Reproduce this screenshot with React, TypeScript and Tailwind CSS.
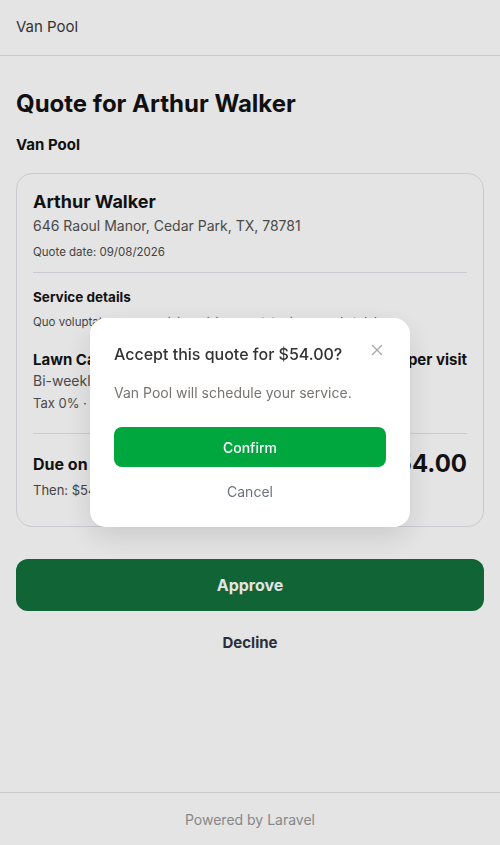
import React from "react";

const font = { fontFamily: "Inter, 'Noto Sans', sans-serif" };

function QuoteCard() {
  return (
    <div className="mt-[18px] rounded-2xl border border-[#e0e4e9] bg-white px-4 pt-4 pb-[26px]">
      <p className="text-[18px] leading-6 font-bold text-[#141414]">Arthur Walker</p>
      <p className="mt-0.5 text-[14px] leading-5 text-[#535353]">646 Raoul Manor, Cedar Park, TX, 78781</p>
      <p className="mt-2 text-[11.5px] leading-4 text-[#4c4c4c]">Quote date: 09/08/2026</p>

      <div className="mt-3 border-t border-[#e0e4e9]" />

      <p className="mt-3.5 text-[13.5px] leading-5 font-bold text-[#141414]">Service details</p>
      <p className="mt-[7px] text-[11.5px] leading-4 text-[#4c4c4c]">
        Quo voluptatem rerum minima nisi consectetur ipsa quod et dolor.
      </p>

      <div className="mt-[19px] flex items-center justify-between">
        <p className="text-[15px] leading-[22px] font-bold text-[#141414]">Lawn Care</p>
        <p className="text-[15px] leading-[22px] font-bold text-[#141414]">$54.00 per visit</p>
      </div>
      <p className="text-[14px] leading-5 text-[#535353]">Bi-weekly</p>
      <p className="mt-0.5 text-[13px] leading-5 text-[#535353]">Tax 0% · $0.00</p>

      <div className="mt-5 border-t border-[#e0e4e9]" />

      <div className="mt-[14px] flex items-center justify-between">
        <p className="text-[16px] leading-6 font-bold text-[#141414]">Due on approval</p>
        <p className="text-[24px] leading-8 font-bold text-[#141414]">$54.00</p>
      </div>
      <p className="text-[13px] leading-5 text-[#4c4c4c]">Then: $54.00 every 2 weeks</p>
    </div>
  );
}

function ConfirmModal() {
  return (
    <div className="fixed inset-0 flex items-center justify-center bg-[rgba(0,0,0,0.106)]">
      <div className="relative w-[320px] rounded-2xl bg-white px-6 pt-6 pb-5 shadow-[0_10px_30px_rgba(0,0,0,0.12)]">
        <button className="absolute right-[27px] top-[26px] text-[#a8a8a8]" aria-label="Close">
          <svg width="12" height="12" viewBox="0 0 12 12" fill="none" stroke="currentColor" strokeWidth="1.3">
            <path d="M1 1l10 10M11 1L1 11" />
          </svg>
        </button>
        <p className="text-[16px] leading-6 font-medium text-[#333]">Accept this quote for $54.00?</p>
        <p className="mt-[17px] text-[14px] leading-5 text-[#767370]">Van Pool will schedule your service.</p>
        <button className="mt-6 h-10 w-full rounded-lg bg-[#00a63e] text-[14px] font-medium text-white">
          Confirm
        </button>
        <button className="mt-2 h-8 w-full text-[14px] text-[#6a7282]">Cancel</button>
      </div>
    </div>
  );
}

export default function App() {
  return (
    <div className="flex min-h-screen flex-col bg-white" style={font}>
      <header className="flex h-14 items-center border-b border-[#e2e2e2] px-4">
        <span className="text-[15px] text-[#3a3a3a]">Van Pool</span>
      </header>

      <main className="flex-1 px-4 pt-8">
        <h1 className="text-[24px] leading-8 font-bold text-[#121212]">Quote for Arthur Walker</h1>
        <p className="mt-[15px] text-[15px] leading-5 font-bold text-[#141414]">Van Pool</p>

        <QuoteCard />

        <button className="mt-8 h-[52px] w-full rounded-xl bg-[#13703c] text-[16px] font-bold text-white">
          Approve
        </button>
        <button className="mt-2.5 h-11 w-full text-[15px] font-bold text-[#303642]">Decline</button>
      </main>

      <footer className="flex h-[53px] items-center justify-center border-t border-[#e2e2e2]">
        <span className="text-[14px] text-[#989898]">Powered by Laravel</span>
      </footer>

      <ConfirmModal />
    </div>
  );
}
